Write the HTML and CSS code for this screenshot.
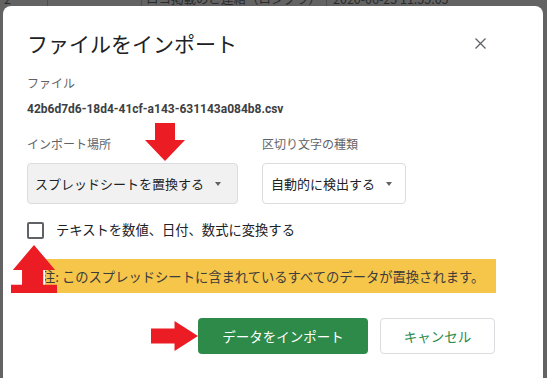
FILE: index.html
```html
<!DOCTYPE html>
<html lang="ja">
<head>
    <meta charset="UTF-8">
    <title>ファイルをインポート</title>
    <link rel="stylesheet" href="styles.css">
</head>
<body>

<!-- Feuille en arriere-plan -->
<div class="sheet">
    <div class="sheet-row">
        <span class="cell cell-a">2</span>
        <span class="cell cell-b"></span>
        <span class="cell cell-c">ロコ掲載のご連絡（ロングラ）</span>
        <span class="cell cell-d">2020-06-25 11:55:05</span>
    </div>
</div>

<!-- Dialogue d'import -->
<div class="dialog">
    <div class="dialog-head">
        <h1 class="dialog-title">ファイルをインポート</h1>
        <button class="close-btn" aria-label="閉じる">
            <svg width="11" height="11" viewBox="0 0 11 11">
                <path d="M0.5 0.5 L10.5 10.5 M10.5 0.5 L0.5 10.5" stroke="#5f6368" stroke-width="1.3" fill="none"/>
            </svg>
        </button>
    </div>

    <div class="field-label">ファイル</div>
    <div class="file-name">42b6d7d6-18d4-41cf-a143-631143a084b8.csv</div>

    <div class="options">
        <div class="option">
            <div class="field-label">インポート場所</div>
            <div class="select select-active">スプレッドシートを置換する<span class="caret"></span></div>
            <div class="arrow arrow-down"></div>
        </div>
        <div class="option">
            <div class="field-label">区切り文字の種類</div>
            <div class="select select-plain">自動的に検出する<span class="caret"></span></div>
        </div>
    </div>

    <label class="check-row">
        <span class="checkbox"></span>
        テキストを数値、日付、数式に変換する
    </label>

    <div class="notice">
        <div class="notice-text">注: このスプレッドシートに含まれているすべてのデータが置換されます。</div>
        <div class="arrow arrow-up"></div>
    </div>

    <div class="actions">
        <div class="arrow arrow-right"></div>
        <button class="btn btn-primary">データをインポート</button>
        <button class="btn btn-cancel">キャンセル</button>
    </div>
</div>

</body>
</html>
```

FILE: styles.css
```css
:root {
    --backdrop: #636363;
    --text-color: #202124;
    --label-color: #5f6368;
    --border: #dadce0;
    --green: #2d8a48;
    --red: #ec1c24;
    --yellow: #f5c64a;
}

body {
    margin: 0;
    width: 547px;
    height: 378px;
    overflow: hidden;
    background-color: var(--backdrop);
    font-family: "Noto Sans CJK JP", Roboto, sans-serif;
    color: var(--text-color);
    position: relative;
}

/* Feuille */
.sheet {
    height: 6px;
    overflow: hidden;
}

.sheet-row {
    display: flex;
    margin-top: -9px;
    height: 16px;
    font-size: 12.5px;
    line-height: 16px;
    color: #2a2a2a;
}

.cell {
    border-right: 1px solid #4e4e4e;
    padding-left: 4px;
    box-sizing: border-box;
    white-space: nowrap;
    overflow: hidden;
}

.cell-a { width: 48px; }
.cell-b { width: 94px; }
.cell-c { width: 185px; }
.cell-d { flex: 1; border-right: none; padding-left: 6px; }

/* Dialogue */
.dialog {
    position: absolute;
    top: 6px;
    left: 3px;
    width: 540px;
    height: 390px;
    box-sizing: border-box;
    background-color: #fff;
    border-radius: 8px;
    padding: 21px 24px 0 24px;
}

.dialog-head {
    display: flex;
    justify-content: space-between;
    align-items: center;
    margin-bottom: 16px;
}

.dialog-title {
    margin: 0;
    font-size: 21px;
    font-weight: 400;
    line-height: 32px;
}

.close-btn {
    background: none;
    border: none;
    padding: 0;
    margin-right: 33px;
    width: 11px;
    height: 11px;
    display: flex;
}

.field-label {
    font-size: 12px;
    line-height: 16px;
    color: var(--label-color);
}

.file-name {
    font-family: Roboto, sans-serif;
    font-weight: 700;
    font-size: 12px;
    line-height: 16px;
    color: #3c4043;
    margin-top: 10px;
}

.options {
    display: flex;
    gap: 24px;
    margin-top: 19px;
}

.option {
    position: relative;
}

.option .field-label {
    margin-bottom: 11px;
}

.select {
    display: flex;
    align-items: center;
    height: 41px;
    box-sizing: border-box;
    border: 1px solid var(--border);
    border-radius: 4px;
    font-size: 13px;
    white-space: nowrap;
    color: var(--text-color);
}

.select-active {
    background-color: #f1f1f1;
    width: 211px;
    padding-left: 7px;
}

.select-plain {
    width: 144px;
    padding-left: 8px;
}

.caret {
    width: 0;
    height: 0;
    border-left: 3.5px solid transparent;
    border-right: 3.5px solid transparent;
    border-top: 4px solid #5f6368;
    margin-left: 11px;
}

.check-row {
    display: flex;
    align-items: center;
    margin-top: 17px;
    font-size: 13.3px;
    line-height: 18px;
}

.checkbox {
    width: 17px;
    height: 17px;
    box-sizing: border-box;
    border: 2px solid #5f6368;
    border-radius: 2px;
    margin-right: 12px;
}

/* Avertissement */
.notice {
    position: relative;
    margin-top: 20px;
    margin-left: 18px;
    width: 451px;
    height: 34px;
    background-color: var(--yellow);
    display: flex;
    align-items: center;
}

.notice-text {
    font-size: 13.3px;
    color: #3c3c3c;
    white-space: nowrap;
    overflow: hidden;
    text-indent: -3px;
}

.actions {
    display: flex;
    justify-content: flex-end;
    align-items: center;
    gap: 12px;
    margin-top: 25px;
    margin-right: 24px;
}

.btn {
    height: 36px;
    border-radius: 4px;
    font-family: "Noto Sans CJK JP", sans-serif;
    font-size: 13.5px;
    cursor: pointer;
}

.btn-primary {
    width: 170px;
    background-color: var(--green);
    border: none;
    color: #fff;
}

.btn-cancel {
    width: 115px;
    background-color: #fff;
    border: 1px solid var(--border);
    color: var(--green);
}

/* Fleches rouges (annotations) */
.arrow {
    position: absolute;
    background-color: var(--red);
}

.arrow-down {
    top: -13px;
    left: 118px;
    width: 40px;
    height: 38px;
    clip-path: polygon(25% 0, 75% 0, 75% 45%, 100% 45%, 50% 100%, 0 45%, 25% 45%);
}

.arrow-up {
    top: -14px;
    left: -34px;
    width: 46px;
    height: 48px;
    clip-path: polygon(50% 0, 96% 52%, 70% 52%, 70% 83%, 100% 83%, 100% 100%, 0 100%, 0 83%, 24% 83%, 24% 52%, 4% 52%);
}

.arrow-right {
    position: static;
    width: 47px;
    height: 30px;
    margin-right: -12px;
    clip-path: polygon(0 25%, 50% 25%, 50% 0, 100% 50%, 50% 100%, 50% 75%, 0 75%);
}
```
